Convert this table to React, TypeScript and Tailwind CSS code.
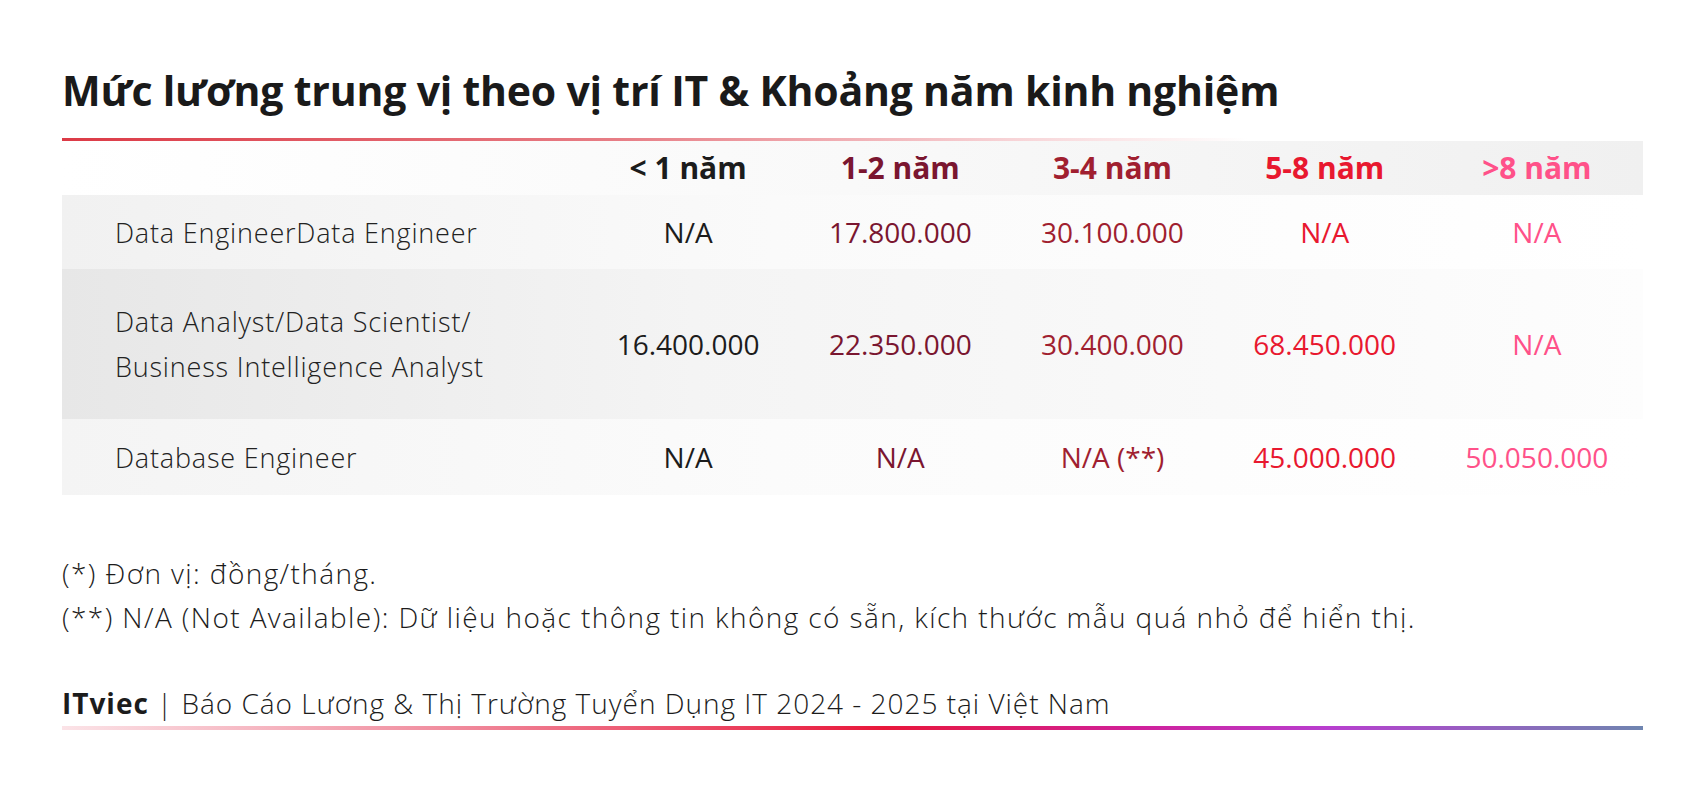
const COLS = [
  { label: '< 1 năm', color: 'text-[#1c1c1c]' },
  { label: '1-2 năm', color: 'text-[#7a1630]' },
  { label: '3-4 năm', color: 'text-[#a01f30]' },
  { label: '5-8 năm', color: 'text-[#e8182f]' },
  { label: '>8 năm', color: 'text-[#ff5189]' },
];

const ROWS = [
  {
    name: ['Data EngineerData Engineer'],
    values: ['N/A', '17.800.000', '30.100.000', 'N/A', 'N/A'],
    height: 'h-[74px]',
    bg: 'bg-[linear-gradient(90deg,#f1f1f1_0%,#fafafa_45%,#ffffff_100%)]',
  },
  {
    name: ['Data Analyst/Data Scientist/', 'Business Intelligence Analyst'],
    values: ['16.400.000', '22.350.000', '30.400.000', '68.450.000', 'N/A'],
    height: 'h-[150px]',
    bg: 'bg-[linear-gradient(90deg,#e7e7e7_0%,#f4f4f4_40%,#fdfdfd_100%)]',
  },
  {
    name: ['Database Engineer'],
    values: ['N/A', 'N/A', 'N/A (**)', '45.000.000', '50.050.000'],
    height: 'h-[76px]',
    bg: 'bg-[linear-gradient(90deg,#f4f4f4_0%,#fbfbfb_45%,#ffffff_100%)]',
  },
];

export default function App() {
  return (
    <div className="h-[796px] w-[1705px] bg-white pl-[62px] font-['Open_Sans','Noto_Sans',sans-serif] text-[#1c1c1c]">
      <div className="w-[1581px]">
        <h1 className="pt-[66px] text-[41px] font-bold leading-[48px] tracking-[-0.005em] text-[#1a1a1a]">
          Mức lương trung vị theo vị trí IT &amp; Khoảng năm kinh nghiệm
        </h1>
        <div className="mt-[24px] h-[3px] w-full bg-[linear-gradient(90deg,#dc3a46_0%,#e77d85_35%,#f7d3d6_60%,#ffffff_75%)]" />

        {/* header */}
        <div className="grid h-[54px] grid-cols-[520px_repeat(5,1fr)] items-center bg-[linear-gradient(90deg,#ffffff_0%,#f9f9f9_50%,#f0f0f0_100%)]">
          <div />
          {COLS.map((c) => (
            <div key={c.label} className={`text-center text-[30px] font-bold leading-[36px] ${c.color}`}>
              {c.label}
            </div>
          ))}
        </div>

        {ROWS.map((row, i) => (
          <div
            key={i}
            className={`grid grid-cols-[520px_repeat(5,1fr)] items-center ${row.height} ${row.bg}`}
          >
            <div className="pl-[53px] text-[27px] font-light leading-[45px] tracking-[0.03em] text-[#222]">
              {row.name.map((n) => (
                <div key={n}>{n}</div>
              ))}
            </div>
            {row.values.map((v, j) => (
              <div key={j} className={`text-center text-[28px] leading-[34px] ${COLS[j].color}`}>
                {v}
              </div>
            ))}
          </div>
        ))}

        <div className="mt-[56px] text-[28px] font-light leading-[44px] tracking-[0.05em] text-[#1c1c1c]">
          <div>(*) Đơn vị: đồng/tháng.</div>
          <div>(**) N/A (Not Available): Dữ liệu hoặc thông tin không có sẵn, kích thước mẫu quá nhỏ để hiển thị.</div>
        </div>

        <div className="mt-[49px] text-[28px] leading-[30px] tracking-[0.035em] text-[#1c1c1c]">
          <span className="font-bold">ITviec</span>
          <span className="font-light"> | Báo Cáo Lương &amp; Thị Trường Tuyển Dụng IT 2024 - 2025 tại Việt Nam</span>
        </div>
        <div className="mt-[8px] h-[4px] w-full bg-[linear-gradient(90deg,#fbe3e7_0%,#f08a9c_25%,#e8173a_52%,#d0209a_68%,#b83ecf_80%,#6f85b0_100%)]" />
      </div>
    </div>
  );
}
